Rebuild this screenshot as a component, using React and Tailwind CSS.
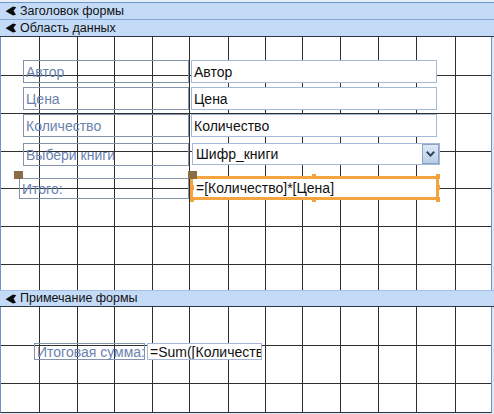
import React from "react";

const VX = [39, 77, 114, 152, 189, 228, 265, 302, 340, 378, 416, 455];

function Grid({ height, rows }) {
  return (
    <svg
      className="absolute left-0 top-0 pointer-events-none"
      width="490"
      height={height}
      shapeRendering="crispEdges"
    >
      {VX.map((x) => (
        <line key={"v" + x} x1={x - 1 + 0.5} y1="0" x2={x - 1 + 0.5} y2={height} stroke="#2f2f2f" strokeWidth="1" />
      ))}
      {rows.map((y) => (
        <line key={"h" + y} x1="0" y1={y + 0.5} x2="490" y2={y + 0.5} stroke="#2f2f2f" strokeWidth="1" />
      ))}
    </svg>
  );
}

function BarIcon() {
  return (
    <svg width="12" height="10" viewBox="0 0 12 10" className="shrink-0">
      <path d="M0.5 5.2 L8 0.4 L11.2 1.2 L8.6 4.8 L11 8.8 L8 9.6 Z" fill="#0d0d0d" />
    </svg>
  );
}

function Bar({ children, className }) {
  return (
    <div className={"flex items-center gap-[3px] pl-[5px] bg-[#c4dbf8] text-[12.5px] text-[#111] " + className}>
      <BarIcon />
      <span className="leading-none">{children}</span>
    </div>
  );
}

function Label({ left, top, w, h, children }) {
  return (
    <div
      className="absolute flex items-center pl-[2px] border border-[#8493aa] text-[14px] text-[#6a82ae] leading-none whitespace-nowrap"
      style={{ left, top, width: w, height: h }}
    >
      {children}
    </div>
  );
}

function TextBox({ left, top, w, h, children }) {
  return (
    <div
      className="absolute flex items-center pl-[2px] border border-[#a5b8d6] bg-white text-[14px] text-[#111] leading-none whitespace-nowrap overflow-hidden"
      style={{ left, top, width: w, height: h }}
    >
      {children}
    </div>
  );
}

function Handle({ left, top }) {
  return <div className="absolute w-[9px] h-[8px] bg-[#8a6d46]" style={{ left, top }} />;
}

function OHandle({ left, top }) {
  return <div className="absolute w-[4px] h-[5px] bg-[#f4a23c]" style={{ left, top }} />;
}

export default function App() {
  return (
    <div className="w-[494px] h-[414px] bg-[#dde7f4] overflow-hidden font-['Liberation_Sans',Arial,sans-serif]">
      <div className="h-[2px] bg-[#e6edf7]" />
      <Bar className="h-[17px] border-t border-[#6f96cc]">Заголовок формы</Bar>
      <Bar className="h-[18px] border-t border-b border-t-[#86a7d7] border-b-[#2e3642]">Область данных</Bar>

      {/* Data section */}
      <div className="relative w-[492px] h-[253px] bg-white border-l border-r border-[#6f93c6]">
        <Grid height={253} rows={[38, 76, 114, 151, 189, 227]} />

        <Label left={22} top={23} w={166} h={23}>Автор</Label>
        <TextBox left={190} top={23} w={246} h={23}>Автор</TextBox>

        <Label left={22} top={50} w={166} h={23}>Цена</Label>
        <TextBox left={190} top={50} w={246} h={23}>Цена</TextBox>

        <Label left={22} top={77} w={166} h={23}>Количество</Label>
        <TextBox left={190} top={77} w={246} h={23}>Количество</TextBox>

        <Label left={22} top={106} w={166} h={23}>Выбери книги</Label>
        <div className="absolute flex items-center border border-[#a5b8d6] bg-white text-[14px] text-[#111] leading-none" style={{ left: 191, top: 106, width: 248, height: 22 }}>
          <span className="pl-[3px] flex-1">Шифр_книги</span>
          <div className="w-[17px] h-[20px] flex items-center justify-center border border-[#8aa4c8] bg-[linear-gradient(#dfe9f6,#b9cde6)]">
            <svg width="9" height="6" viewBox="0 0 9 6">
              <path d="M0.8 0.8 L4.5 4.6 L8.2 0.8" stroke="#33435c" strokeWidth="2" fill="none" />
            </svg>
          </div>
        </div>

        <Label left={18} top={141} w={170} h={21}>Итого:</Label>
        <Handle left={13} top={134} />

        <div className="absolute flex items-center pl-[3px] border-[3px] border-[#f5a540] bg-white text-[14px] text-[#111] leading-none whitespace-nowrap" style={{ left: 189, top: 139, width: 249, height: 24 }}>
          =[Количество]*[Цена]
        </div>
        <Handle left={187} top={134} />
        <OHandle left={311} top={137} />
        <OHandle left={435} top={137} />
        <OHandle left={435} top={148} />
        <OHandle left={435} top={160} />
        <OHandle left={311} top={160} />
        <OHandle left={189} top={160} />
        <OHandle left={189} top={148} />
      </div>

      <Bar className="h-[17px] border-t border-b border-t-[#a3bfe6] border-b-[#2e3642]">Примечание формы</Bar>

      {/* Footer section */}
      <div className="relative w-[492px] h-[106px] bg-white border-l border-r border-b border-[#6f93c6] border-b-[#2e3642]">
        <Grid height={106} rows={[38, 76]} />
        <Label left={33} top={36} w={111} h={17}>Итоговая сумма:</Label>
        <TextBox left={146} top={36} w={115} h={17}>=Sum([Количеств</TextBox>
      </div>
    </div>
  );
}
